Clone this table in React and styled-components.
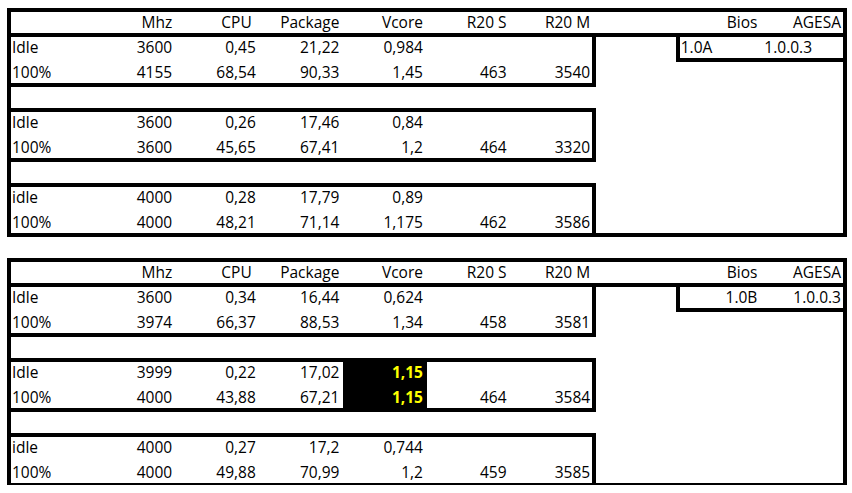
import React from 'react';
import styled, { createGlobalStyle } from 'styled-components';

const GlobalStyle = createGlobalStyle`
  html, body {
    margin: 0;
    padding: 0;
    background: #fff;
  }
  body {
    font-family: "Open Sans", "Liberation Sans", sans-serif;
    color: #000;
  }
`;

const Sheet = styled.div`
  display: flex;
  flex-direction: column;
  gap: 25px;
  padding: 10px 0 0 9px;
`;

const Grid = styled.div`
  display: grid;
  grid-template-columns: repeat(10, 83.6px);
  grid-template-rows: repeat(9, 25px);
  width: 836px;
`;

const Cell = styled.div`
  grid-row: ${({ $row }) => $row};
  grid-column: ${({ $col }) => $col};
  font-size: 15.5px;
  line-height: 25px;
  white-space: pre;
  overflow: visible;
  padding: 0 ${({ $align }) => ($align === 'left' ? '0 0 3px' : '4px 0 0')};
  text-align: ${({ $align }) => $align};
  background: ${({ $dark }) => ($dark ? '#000' : 'transparent')};
  color: ${({ $dark }) => ($dark ? '#ffff00' : '#000')};
  font-weight: ${({ $dark }) => ($dark ? 700 : 400)};
`;

const Frame = styled.div`
  grid-row: ${({ $row }) => $row};
  grid-column: ${({ $col }) => $col};
  margin: -2px;
  border: 4px solid #000;
  pointer-events: none;
`;

const header = ['', 'Mhz', 'CPU\u00a0', 'Package', 'Vcore', 'R20 S', 'R20 M', '', 'Bios', 'AGESA'];

const first = [
  header,
  ['Idle', '3600', '0,45', '21,22', '0,984', '', '', '', '1.0A', '1.0.0.3'],
  ['100%', '4155', '68,54', '90,33', '1,45', '463', '3540'],
  [],
  ['Idle', '3600', '0,26', '17,46', '0,84'],
  ['100%', '3600', '45,65', '67,41', '1,2', '464', '3320'],
  [],
  ['idle', '4000', '0,28', '17,79', '0,89'],
  ['100%', '4000', '48,21', '71,14', '1,175', '462', '3586'],
];

const second = [
  header,
  ['Idle', '3600', '0,34', '16,44', '0,624', '', '', '', '1.0B', '1.0.0.3'],
  ['100%', '3974', '66,37', '88,53', '1,34', '458', '3581'],
  [],
  ['Idle', '3999', '0,22', '17,02', '1,15'],
  ['100%', '4000', '43,88', '67,21', '1,15', '464', '3584'],
  [],
  ['idle', '4000', '0,27', '17,2', '0,744'],
  ['100%', '4000', '49,88', '70,99', '1,2', '459', '3585'],
];

const frames = [
  { row: '1 / 10', col: '1 / 11' },
  { row: '1 / 2', col: '1 / 11' },
  { row: '2 / 4', col: '1 / 8' },
  { row: '5 / 7', col: '1 / 8' },
  { row: '8 / 10', col: '1 / 8' },
  { row: '2 / 3', col: '9 / 11' },
];

function alignFor(rowIdx, colIdx, biosLeft) {
  if (colIdx === 0) return 'left';
  if (biosLeft && rowIdx === 1 && colIdx >= 8) return 'left';
  return 'right';
}

function Table({ rows, biosLeft, darkCells = [] }) {
  return (
    <Grid>
      {rows.map((row, r) =>
        row.map((text, c) =>
          text || darkCells.includes(`${r}-${c}`) ? (
            <Cell
              key={`${r}-${c}`}
              $row={r + 1}
              $col={c + 1}
              $align={alignFor(r, c, biosLeft)}
              $dark={darkCells.includes(`${r}-${c}`)}
            >
              {text}
            </Cell>
          ) : null
        )
      )}
      {frames.map((f, i) => (
        <Frame key={i} $row={f.row} $col={f.col} />
      ))}
    </Grid>
  );
}

export default function App() {
  return (
    <>
      <GlobalStyle />
      <Sheet>
        <Table rows={first} biosLeft />
        <Table rows={second} darkCells={['4-4', '5-4']} />
      </Sheet>
    </>
  );
}
